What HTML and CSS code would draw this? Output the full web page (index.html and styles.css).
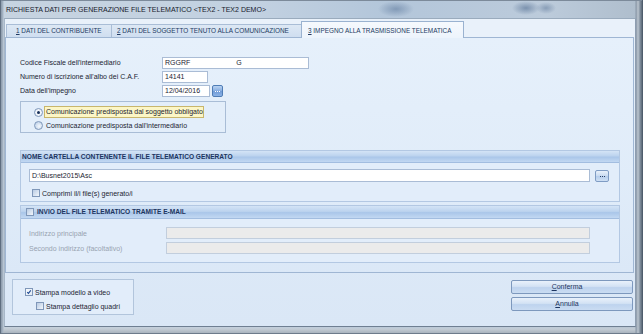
FILE: index.html
```html
<!DOCTYPE html>
<html lang="it">
<head>
<meta charset="utf-8">
<title>Richiesta dati</title>
<link rel="stylesheet" href="styles.css">
</head>
<body>
<div class="window">
  <div class="titlebar">RICHIESTA DATI PER GENERAZIONE FILE TELEMATICO &lt;TEX2 - TEX2 DEMO&gt;</div>
  <div class="client">
    <div class="tabs">
      <div class="tab tab1"><u>1</u> DATI DEL CONTRIBUENTE</div>
      <div class="tab tab2"><u>2</u> DATI DEL SOGGETTO TENUTO ALLA COMUNICAZIONE</div>
      <div class="tab tab3 active"><u>3</u> IMPEGNO ALLA TRASMISSIONE TELEMATICA</div>
    </div>
    <div class="panel">
      <div class="fields">
        <div class="label">Codice Fiscale dell'intermediario</div>
        <div class="input w-cf">RGGRF<span class="redact"></span>G</div>
        <div class="label">Numero di iscrizione all'albo dei C.A.F.</div>
        <div class="input w-caf">14141</div>
        <div class="label">Data dell'impegno</div>
        <div class="date-row">
          <div class="input w-date">12/04/2016</div>
          <div class="dots-btn blue"><span></span><span></span><span></span></div>
        </div>
      </div>

      <div class="radiobox">
        <div class="radio-row">
          <span class="radio checked"></span>
          <span class="focus-label">Comunicazione predisposta dal soggetto obbligato</span>
        </div>
        <div class="radio-row">
          <span class="radio"></span>
          <span class="plain-label">Comunicazione predisposta dall'intermediario</span>
        </div>
      </div>

      <div class="section sec1">
        <div class="sec-head">NOME CARTELLA CONTENENTE IL FILE TELEMATICO GENERATO</div>
        <div class="sec-body">
          <div class="path-row">
            <div class="input w-path">D:\Busnet2015\Asc</div>
            <div class="dots-btn light"><span></span><span></span><span></span></div>
          </div>
          <div class="check-row">
            <span class="checkbox"></span>
            <span>Comprimi il/i file(s) generato/i</span>
          </div>
        </div>
      </div>

      <div class="section sec2">
        <div class="sec-head with-check"><span class="checkbox"></span>INVIO DEL FILE TELEMATICO TRAMITE E-MAIL</div>
        <div class="sec-body mail">
          <div class="mail-row">
            <span class="dis-label">Indirizzo principale</span>
            <div class="input disabled w-mail"></div>
          </div>
          <div class="mail-row">
            <span class="dis-label">Secondo indirizzo (facoltativo)</span>
            <div class="input disabled w-mail"></div>
          </div>
        </div>
      </div>
    </div>

    <div class="footer">
      <div class="printbox">
        <div class="check-row pr1">
          <span class="checkbox checked"><svg viewBox="0 0 8 8" width="8" height="8"><path d="M1.6 4.2 L3.2 5.8 L6.4 1.8" fill="none" stroke="#1f4a93" stroke-width="1.4"/></svg></span>
          <span>Stampa modello a video</span>
        </div>
        <div class="check-row pr2">
          <span class="checkbox"></span>
          <span>Stampa dettaglio quadri</span>
        </div>
      </div>
      <div class="buttons">
        <div class="btn"><u>C</u>onferma</div>
        <div class="btn"><u>A</u>nnulla</div>
      </div>
    </div>
  </div>
</div>
</body>
</html>
```

FILE: styles.css
```css
* { box-sizing: border-box; }
html, body { margin: 0; padding: 0; }
body {
  width: 643px;
  height: 334px;
  overflow: hidden;
  font-family: "Liberation Sans", Arial, sans-serif;
  font-size: 7px;
  color: #1b2432;
  background: #b8c3ce;
}
.window {
  width: 643px;
  height: 334px;
  display: flex;
  flex-direction: column;
  border-left: 1px solid #5f6e80;
  border-right: 1px solid #4f5d6d;
  border-bottom: 1px solid #6d7b8b;
  background:
    linear-gradient(90deg, #8a99aa 0, #a9b7c6 2px, rgba(200,212,224,0) 3px),
    linear-gradient(270deg, #5d6a78 0, #8391a0 2px, #bcc6d0 4px, #8896a6 6px, rgba(140,155,170,0) 7px),
    linear-gradient(0deg, #a9b4bf 0, #c3ccd5 4px, rgba(190,200,210,0) 7px),
    radial-gradient(ellipse 18px 8px at 395px 9px, rgba(70,100,140,0.45), rgba(70,100,140,0) 100%),
    radial-gradient(ellipse 14px 7px at 525px 8px, rgba(60,90,130,0.5), rgba(60,90,130,0) 100%),
    radial-gradient(ellipse 10px 6px at 545px 8px, rgba(60,90,130,0.4), rgba(60,90,130,0) 100%),
    linear-gradient(90deg, #c6d3e0 0%, #c2d1e1 40%, #b3c6da 60%, #bccbdb 85%, #aebdcc 100%);
}
.titlebar {
  height: 18px;
  line-height: 18px;
  padding-left: 5px;
  font-size: 7px;
  color: #16202c;
  white-space: nowrap;
  border-top: 1px solid #7c8a9a;
}
.client {
  flex: 1;
  margin: 0 6px 6px 3px;
  display: flex;
  flex-direction: column;
  background: linear-gradient(180deg, #e6eff9 0%, #dfebf8 50%, #dae7f6 100%);
  border-top: 1px solid #9aabbd;
  border-left: 1px solid #a7b7c8;
  border-right: 1px solid #8d9db0;
  border-bottom: 1px solid #6f7f92;
}
.tabs {
  height: 18px;
  display: flex;
  align-items: flex-end;
  padding-left: 1px;
  background: #e9f1fa;
}
.tab {
  height: 13px;
  line-height: 12px;
  font-size: 6.4px;
  color: #213a62;
  white-space: nowrap;
  background: linear-gradient(180deg, #dde8f4, #cfdef0);
  border: 1px solid #a9bdd6;
  border-bottom: none;
  margin-right: -1px;
}
.tab u { text-decoration: underline; }
.tab1 { width: 106px; padding-left: 9px; }
.tab2 { width: 191px; padding-left: 5px; }
.tab3 { width: 163px; padding-left: 6px; }
.tab.active {
  line-height: 17px;
  background: linear-gradient(180deg, #f6f9fd, #edf4fc);
  border-color: #9ab2d0;
  position: relative;
  z-index: 1;
  margin-bottom: -1px;
  height: 17px;
}
.panel {
  height: 236px;
  margin: 0 1px 0 0;
  border: 1px solid #9fb6d3;
  background: linear-gradient(180deg, #e6f0fb 0%, #e0ecf9 60%, #dbe8f7 100%);
  padding: 19px 0 0 14px;
}
.fields {
  display: grid;
  grid-template-columns: 142px auto;
  row-gap: 2px;
  align-items: center;
}
.label { line-height: 12px; }
.input {
  height: 12px;
  line-height: 10px;
  background: #fff;
  border: 1px solid #aabcd5;
  padding-left: 2px;
  font-size: 7px;
  color: #1b2432;
  white-space: nowrap;
}
.w-cf { width: 147px; }
.redact { display: inline-block; width: 46px; }
.w-caf { width: 46px; }
.w-date { width: 48px; }
.date-row { display: flex; gap: 2px; align-items: center; }
.dots-btn {
  width: 11px;
  height: 12px;
  border-radius: 2px;
  display: flex;
  align-items: center;
  justify-content: center;
  gap: 1px;
  padding-top: 1px;
}
.dots-btn span { width: 1px; height: 1px; }
.dots-btn.blue {
  border: 1px solid #4f7db6;
  background: linear-gradient(180deg, #b9d3f1 0%, #86ace0 50%, #6f9ad6 51%, #8cb3e6 100%);
}
.dots-btn.blue span { background: #ffffff; }
.dots-btn.light {
  width: 14px;
  border: 1px solid #7f9cc4;
  background: linear-gradient(180deg, #e9f1fb 0%, #c9dbf1 50%, #b5cdec 51%, #cfe0f4 100%);
}
.dots-btn.light span { background: #2a3f63; }

.radiobox {
  width: 206px;
  height: 32px;
  margin-top: 4px;
  border: 1px solid #a9bdd6;
  background: #e3eefa;
  padding: 4px 0 0 13px;
  display: flex;
  flex-direction: column;
  gap: 1px;
}
.radio-row { display: flex; align-items: center; height: 12px; }
.radio {
  width: 9px;
  height: 9px;
  border-radius: 50%;
  border: 1px solid #7f98ba;
  background: radial-gradient(circle at 60% 60%, #f4f8fc 0, #c6d7ec 70%, #a9c2e2 100%);
  display: flex;
  align-items: center;
  justify-content: center;
  margin-right: 1px;
}
.radio.checked { background: radial-gradient(circle, #ffffff 0, #e1e9f3 100%); }
.radio.checked::after {
  content: "";
  width: 3px;
  height: 3px;
  border-radius: 50%;
  background: #18305a;
}
.focus-label {
  height: 12px;
  line-height: 10px;
  padding: 0 1px;
  background: #fcf6c6;
  border: 1px solid #c8b66c;
  width: 160px;
  white-space: nowrap;
}
.plain-label { padding-left: 2px; white-space: nowrap; }

.section {
  width: 600px;
  border: 1px solid #b3c8e3;
  background: #e2edfa;
}
.sec1 { margin-top: 17px; height: 52px; }
.sec2 { margin-top: 3px; height: 58px; }
.sec-head {
  height: 12px;
  line-height: 12px;
  font-weight: bold;
  font-size: 6.6px;
  color: #1c355f;
  padding-left: 1px;
  border-bottom: 1px solid #a2bde0;
  background: linear-gradient(180deg, #d4e4f6 0%, #bcd3ee 45%, #aac6e9 55%, #c2d8f2 100%);
  white-space: nowrap;
}
.sec-head.with-check {
  height: 13px;
  display: flex;
  align-items: center;
  padding-left: 5px;
  gap: 3px;
}
.sec-body { padding: 6px 0 0 8px; }
.path-row { display: flex; align-items: center; gap: 5px; }
.w-path { width: 561px; height: 13px; line-height: 11px; }
.check-row {
  display: flex;
  align-items: center;
  gap: 2px;
  height: 10px;
  margin-top: 6px;
  margin-left: 3px;
  white-space: nowrap;
}
.checkbox {
  width: 8px;
  height: 8px;
  border: 1px solid #7f97b9;
  background: linear-gradient(135deg, #b9cbe3 0%, #dbe5f2 60%, #f2f6fb 100%);
  display: inline-flex;
  align-items: center;
  justify-content: center;
  flex: none;
}
.checkbox.checked {
  background: linear-gradient(135deg, #f6f9fc, #e3ebf5);
}
.checkbox svg { display: block; }
.sec-body.mail { padding: 8px 0 0 8px; display: flex; flex-direction: column; gap: 3px; }
.mail-row { display: flex; align-items: center; height: 12px; }
.dis-label { width: 137px; color: #98a3b1; white-space: nowrap; }
.input.disabled { background: #ebebeb; border-color: #c2cedd; }
.w-mail { width: 424px; }

.footer {
  flex: 1;
  display: flex;
  justify-content: space-between;
  align-items: flex-start;
  padding: 6px 2px 0 7px;
}
.printbox {
  width: 122px;
  height: 36px;
  border: 1px solid #b2c5dc;
  background: #e2edfa;
  padding-top: 7px;
}
.printbox .check-row { margin-top: 0; }
.pr1 { margin-left: 12px !important; height: 10px; }
.pr2 { margin-left: 23px !important; margin-top: 4px !important; height: 10px; }
.buttons {
  display: flex;
  flex-direction: column;
  gap: 3px;
  padding-top: 1px;
}
.btn {
  width: 122px;
  height: 14px;
  line-height: 12px;
  text-align: center;
  font-size: 7px;
  color: #1d3560;
  border: 1px solid #7d98bd;
  border-radius: 2px;
  background: linear-gradient(180deg, #e9f1fb 0%, #d3e2f4 45%, #bed3ee 55%, #cadcf2 100%);
  padding-right: 10px;
}
```
